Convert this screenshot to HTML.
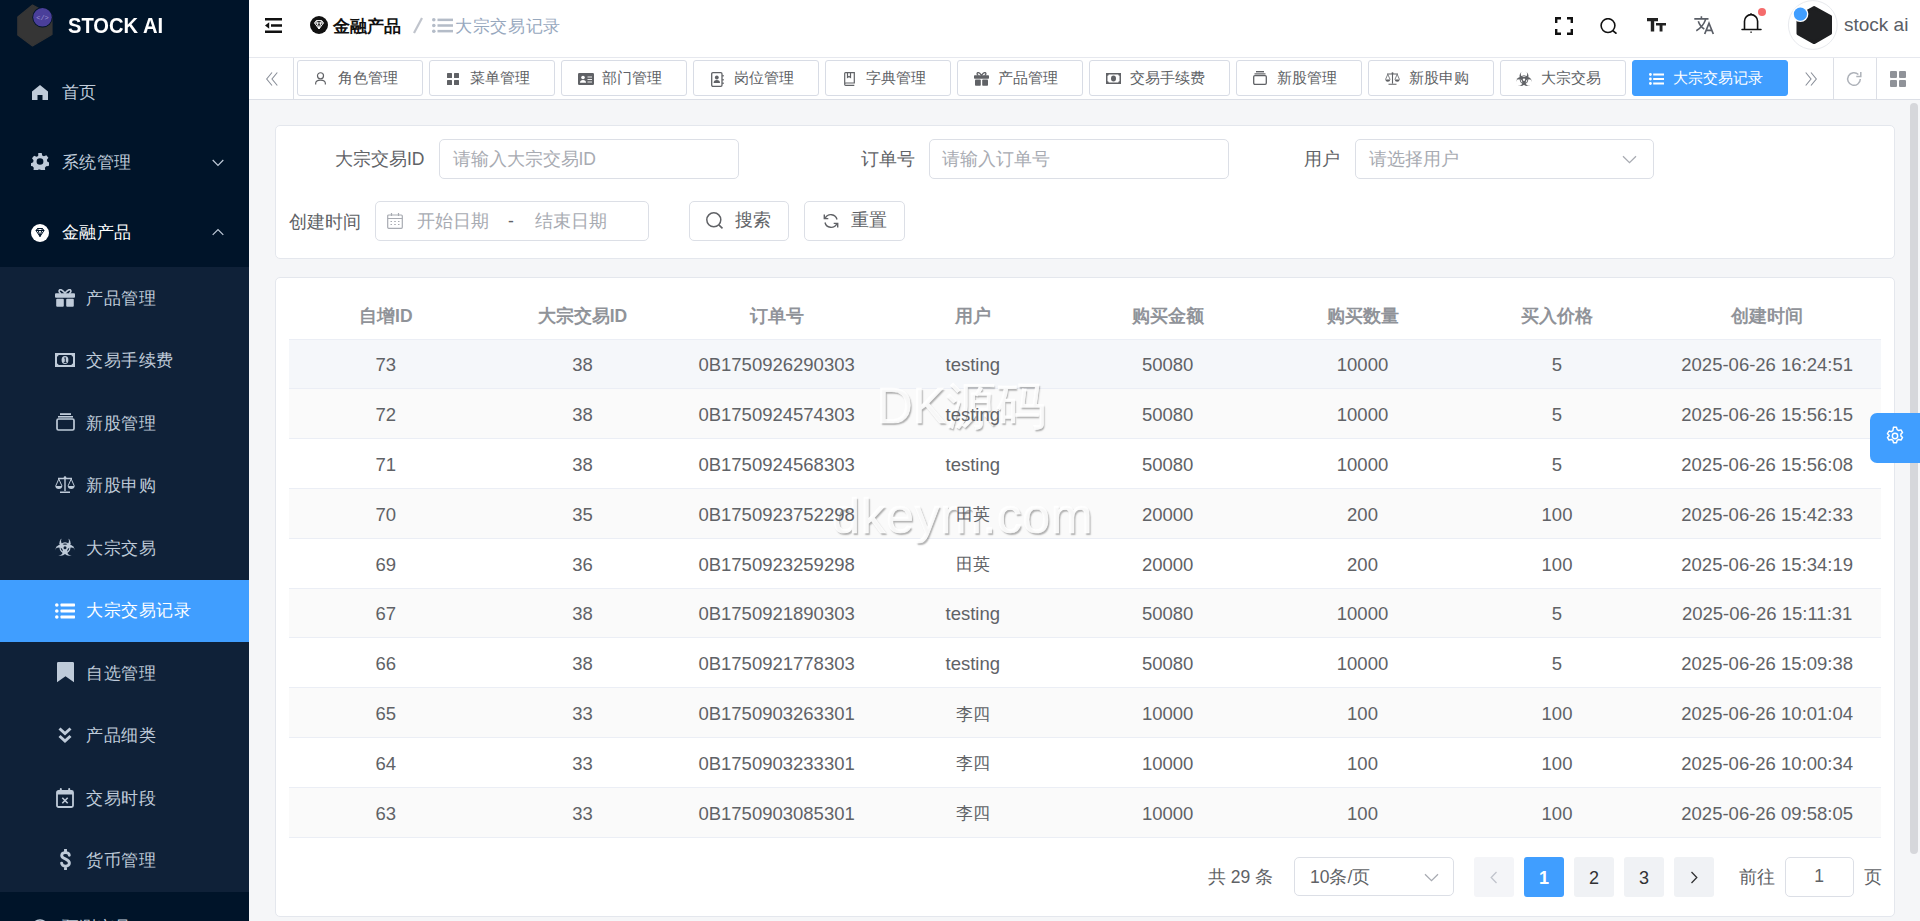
<!DOCTYPE html>
<html><head><meta charset="utf-8">
<style>
*{box-sizing:border-box;margin:0;padding:0}
html,body{width:1920px;height:921px;overflow:hidden;font-family:"Liberation Sans",sans-serif;background:#f5f6f8;color:#606266}
.abs{position:absolute}
#side{position:absolute;left:0;top:0;width:249px;height:921px;background:#001429;overflow:hidden}
#side .sub{position:absolute;left:0;top:267px;width:249px;height:625px;background:#0f2138}
.mi{position:absolute;left:0;width:249px;color:#bfcbd9;font-size:17px;letter-spacing:0.5px;white-space:nowrap}
.mi span{position:absolute}
.mi svg{position:absolute}
#main{position:absolute;left:249px;top:0;width:1671px;height:921px}
#hdr{position:absolute;left:0;top:0;width:1671px;height:57.5px;background:#fff;border-bottom:1px solid #e6e8ee}
#tabs{position:absolute;left:0;top:57.5px;width:1671px;height:42.5px;background:#fff;border-bottom:1px solid #dcdfe6}
.tab{position:absolute;top:2.5px;height:36px;border:1px solid #d8dce5;border-radius:3px;background:#fff;color:#606266;font-size:15px;white-space:nowrap}
.tab span{position:absolute;top:8px}
.tab svg{position:absolute}
.card{position:absolute;background:#fff;border:1px solid #e4e7ed;border-radius:5px}
.lbl{position:absolute;font-size:17.5px;color:#606266;white-space:nowrap}
.inp{position:absolute;height:39px;border:1px solid #dcdfe6;border-radius:5px;background:#fff}
.ph{position:absolute;font-size:17.5px;color:#a8abb2;white-space:nowrap}
.btn{position:absolute;height:39.5px;border:1px solid #dcdfe6;border-radius:5px;background:#fff;color:#606266;font-size:17.5px}
.th{position:absolute;text-align:center;font-size:17.5px;font-weight:bold;color:#909399;white-space:nowrap}
.td{position:absolute;z-index:3;text-align:center;font-size:18.5px;color:#606266;white-space:nowrap}
.wm{z-index:2;color:rgba(255,255,255,0.9);text-shadow:1.5px 1.5px 1.5px rgba(0,0,0,0.3);white-space:nowrap}
.pg{position:absolute;width:40px;height:39.5px;border-radius:3px;text-align:center;line-height:42.5px;font-size:18px}
</style></head><body>
<div id="side">
  <svg class="abs" style="left:17px;top:4px" width="37" height="43" viewBox="0 0 37 43">
    <polygon points="15.5,1 35,11.5 35,30.5 15.5,42 0.8,31 0.8,13" fill="#353535" stroke="#353535" stroke-width="1.2" stroke-linejoin="round"/>
    <circle cx="25.5" cy="13.3" r="10.2" fill="#001429"/>
    <circle cx="25.5" cy="13.3" r="9.3" fill="#4a3f9a"/>
    <text x="25.5" y="16" font-size="7" fill="#9c95d0" text-anchor="middle" font-family="Liberation Mono">&lt;/&gt;</text>
  </svg>
  <div class="abs" style="left:67.5px;top:13px;font-size:22px;font-weight:bold;color:#fff;transform:scaleX(0.915);transform-origin:0 0">STOCK AI</div>

  <div class="mi" style="top:57.5px;height:70px">
    <svg style="left:32px;top:27px" width="16" height="15" viewBox="0 0 16 15"><path d="M8 0 L16 6.5 V15 H10.5 V10 H5.5 V15 H0 V6.5 Z" fill="#bfcbd9"/></svg>
    <span style="left:61.5px;top:23.5px">首页</span>
  </div>
  <div class="mi" style="top:127.5px;height:70px">
    <svg style="left:31px;top:25.5px" width="18" height="17" viewBox="0 0 18 18" preserveAspectRatio="none"><path fill="#bfcbd9" fill-rule="evenodd" d="M7.3 0h3.4l.5 2.6 1.7.9 2.4-1.1 2.1 2.6-1.5 2.2.3 1.9 2.3 1.3-.8 3.3-2.6.3-1.2 1.5.3 2.6-3.1 1.4-1.8-1.9h-1.9l-1.8 1.9-3.1-1.4.3-2.6-1.2-1.5-2.6-.3L-.1 11l2.3-1.3.3-1.9L1 5.6l2.1-2.6 2.4 1.1 1.7-.9zM9 5.6a3.4 3.4 0 1 0 0 6.8 3.4 3.4 0 0 0 0-6.8z"/></svg>
    <span style="left:61.5px;top:23.5px">系统管理</span>
    <svg style="left:211.5px;top:31px" width="12" height="8" viewBox="0 0 12 8"><path d="M.7 1l5.3 5.3L11.3 1" stroke="#bfcbd9" stroke-width="1.2" fill="none"/></svg>
  </div>
  <div class="mi" style="top:197.5px;height:70px;color:#fff">
    <svg style="left:31px;top:26px" width="18" height="18" viewBox="0 0 18 18"><circle cx="9" cy="9" r="9" fill="#fff"/><path d="M5 6.5l1.5-2h5l1.5 2L9 12.5z M5 6.5h8 M7.3 6.5L9 12.5 10.7 6.5 M6.5 4.5l.8 2 M11.5 4.5l-.8 2" stroke="#001429" stroke-width="1" fill="none" stroke-linejoin="round"/></svg>
    <span style="left:61.5px;top:23.5px">金融产品</span>
    <svg style="left:211.5px;top:30px" width="12" height="8" viewBox="0 0 12 8"><path d="M.7 6.8l5.3-5.3 5.3 5.3" stroke="#bfcbd9" stroke-width="1.2" fill="none"/></svg>
  </div>
  <div class="sub">
    <div class="mi" style="top:0.0px;height:62.5px">
      <svg style="left:55px;top:21.5px" width="20" height="18" viewBox="0 0 20 18"><path d="M6 4.2C4 4.2 3.3 1 5.3 .7 7 .4 8.6 2.6 10 4.2 11.4 2.6 13 .4 14.7.7 16.7 1 16 4.2 14 4.2" stroke="#bfcbd9" stroke-width="1.6" fill="none"/><rect x="0" y="4.2" width="20" height="4.5" rx="1" fill="#bfcbd9"/><rect x="1.2" y="9.8" width="7.6" height="8" rx="1" fill="#bfcbd9"/><rect x="11.2" y="9.8" width="7.6" height="8" rx="1" fill="#bfcbd9"/></svg>
      <span style="left:86px;top:19.5px">产品管理</span>
    </div>
    <div class="mi" style="top:62.5px;height:62.5px">
      <svg style="left:55px;top:23px" width="20" height="14" viewBox="0 0 20 14"><rect x="0" y="0" width="20" height="14" fill="#bfcbd9"/><path d="M2 3.5Q3.5 3.5 3.5 2H16.5Q16.5 3.5 18 3.5V10.5Q16.5 10.5 16.5 12H3.5Q3.5 10.5 2 10.5Z" fill="#0f2138"/><ellipse cx="10" cy="7" rx="3.4" ry="4" fill="#bfcbd9"/><path d="M9.2 5.2L10.3 4.6V9.4M8.8 9.4H11.6" stroke="#0f2138" stroke-width="1" fill="none"/></svg>
      <span style="left:86px;top:19.5px">交易手续费</span>
    </div>
    <div class="mi" style="top:125.0px;height:62.5px">
      <svg style="left:55.5px;top:20.5px" width="19" height="18" viewBox="0 0 19 18"><rect x="4" y="0.2" width="11" height="1.8" fill="#bfcbd9"/><rect x="2" y="3" width="15" height="1.6" fill="#bfcbd9"/><rect x="1" y="6" width="17" height="11" rx="1.5" stroke="#bfcbd9" stroke-width="1.7" fill="none"/></svg>
      <span style="left:86px;top:19.5px">新股管理</span>
    </div>
    <div class="mi" style="top:187.5px;height:62.5px">
      <svg style="left:55px;top:21px" width="20" height="17" viewBox="0 0 20 17"><circle cx="10" cy="1.5" r="1.3" fill="#bfcbd9"/><path d="M3 2.5H17M10 2.5V15M5 16.2H15" stroke="#bfcbd9" stroke-width="1.4"/><path d="M3.8 3L.7 10M3.8 3L7 10M16.2 3L13 10M16.2 3L19.3 10" stroke="#bfcbd9" stroke-width="1"/><path d="M.3 10H7.3Q7 13 3.8 13 .6 13 .3 10ZM12.7 10H19.7Q19.4 13 16.2 13 13 13 12.7 10Z" fill="#bfcbd9"/></svg>
      <span style="left:86px;top:19.5px">新股申购</span>
    </div>
    <div class="mi" style="top:250.0px;height:62.5px">
      <svg style="left:55px;top:19.5px" width="20" height="20" viewBox="0 0 20 20"><defs><mask id="bm1"><rect x="-5" y="-5" width="30" height="30" fill="#fff"/><circle cx="10.00" cy="3.70" r="3.95" fill="#000"/><circle cx="16.15" cy="14.35" r="3.95" fill="#000"/><circle cx="3.85" cy="14.35" r="3.95" fill="#000"/><circle cx="10" cy="10.8" r="1.5" fill="#000"/></mask></defs><g mask="url(#bm1)"><circle cx="10.00" cy="6.20" r="5.6" fill="#bfcbd9"/><circle cx="13.98" cy="13.10" r="5.6" fill="#bfcbd9"/><circle cx="6.02" cy="13.10" r="5.6" fill="#bfcbd9"/></g><circle cx="10" cy="10.8" r="4.9" stroke="#bfcbd9" stroke-width="1.2" fill="none"/></svg>
      <span style="left:86px;top:19.5px">大宗交易</span>
    </div>
    <div class="mi" style="top:312.5px;height:62.5px;background:#409eff;color:#fff">
      <svg style="left:55px;top:23px" width="20" height="16" viewBox="0 0 20 16"><circle cx="1.8" cy="2" r="1.8" fill="#fff"/><circle cx="1.8" cy="8" r="1.8" fill="#fff"/><circle cx="1.8" cy="14" r="1.8" fill="#fff"/><rect x="5.5" y="0.6" width="14.5" height="2.8" rx=".6" fill="#fff"/><rect x="5.5" y="6.6" width="14.5" height="2.8" rx=".6" fill="#fff"/><rect x="5.5" y="12.6" width="14.5" height="2.8" rx=".6" fill="#fff"/></svg>
      <span style="left:86px;top:19.5px">大宗交易记录</span>
    </div>
    <div class="mi" style="top:375.0px;height:62.5px">
      <svg style="left:56.7px;top:20.2px" width="17" height="21" viewBox="0 0 17 21"><path d="M1.3 0H15.7Q17 0 17 1.3V20.3L8.5 14.3 0 20.3V1.3Q0 0 1.3 0Z" fill="#bfcbd9"/></svg>
      <span style="left:86px;top:19.5px">自选管理</span>
    </div>
    <div class="mi" style="top:437.5px;height:62.5px">
      <svg style="left:58px;top:22px" width="14" height="17" viewBox="0 0 14 17"><path d="M1.5 1.5L7 6.5 12.5 1.5M1.5 9L7 14 12.5 9" stroke="#bfcbd9" stroke-width="3" fill="none" stroke-linejoin="miter"/></svg>
      <span style="left:86px;top:19.5px">产品细类</span>
    </div>
    <div class="mi" style="top:500.0px;height:62.5px">
      <svg style="left:56px;top:20.5px" width="18" height="20" viewBox="0 0 18 20"><rect x="1" y="3" width="16" height="16" rx="1.5" stroke="#bfcbd9" stroke-width="1.8" fill="none"/><rect x="1" y="3" width="16" height="3.5" fill="#bfcbd9"/><rect x="3.8" y="0" width="2" height="5" rx="1" fill="#bfcbd9"/><rect x="12.2" y="0" width="2" height="5" rx="1" fill="#bfcbd9"/><path d="M6.3 9.8L11.7 15.2M11.7 9.8L6.3 15.2" stroke="#bfcbd9" stroke-width="1.6"/></svg>
      <span style="left:86px;top:19.5px">交易时段</span>
    </div>
    <div class="mi" style="top:562.5px;height:62.5px">
      <svg style="left:59.5px;top:19.5px" width="11" height="21" viewBox="0 0 11 21"><path d="M9.3 6.3C9.3 4.6 7.6 3.6 5.5 3.6S1.7 4.6 1.7 6.4C1.7 10.4 9.4 9.3 9.4 14 9.4 15.9 7.6 17.1 5.5 17.1S1.6 15.9 1.6 14.1M5.5 0.6V3.6M5.5 17.1V20.3" stroke="#bfcbd9" stroke-width="2.9" fill="none" stroke-linecap="round"/></svg>
      <span style="left:86px;top:19.5px">货币管理</span>
    </div>
  </div>
  <div class="mi" style="top:892.5px;height:70px">
    <svg style="left:31px;top:26px" width="18" height="18" viewBox="0 0 18 18"><circle cx="9" cy="9" r="8" stroke="#bfcbd9" stroke-width="1.5" fill="none"/></svg>
    <span style="left:61.5px;top:23.5px">预测产品</span>
  </div>
</div>
<div id="main">
  <div id="hdr">
    <svg class="abs" style="left:16px;top:17.5px" width="17" height="15" viewBox="0 0 17 15"><path d="M0 1.2H17M6 7.5H17M0 13.8H17" stroke="#111" stroke-width="2.4"/><path d="M0 7.5L4.2 4.3V10.7Z" fill="#111"/></svg>
    <svg class="abs" style="left:60.5px;top:16px" width="18" height="18" viewBox="0 0 18 18"><circle cx="9" cy="9" r="9" fill="#111"/><path d="M4.6 7l1.7-2.4h5.4L13.4 7 9 13z M4.6 7h8.8 M7.2 7L9 13 10.8 7 M6.5 4.8l.8 2.2 M11.5 4.8l-.8 2.2" stroke="#fff" stroke-width="1" fill="none" stroke-linejoin="round"/></svg>
    <div class="abs" style="left:83.5px;top:15px;font-size:17px;font-weight:bold;color:#111;white-space:nowrap;letter-spacing:0.3px">金融产品</div>
    <svg class="abs" style="left:163px;top:17px" width="12" height="17" viewBox="0 0 12 17"><path d="M10 1L2 16" stroke="#c0c4cc" stroke-width="2.2"/></svg>
    <svg class="abs" style="left:182.5px;top:17.5px" width="21" height="15" viewBox="0 0 21 15"><circle cx="1.8" cy="1.8" r="1.8" fill="#b4bcc8"/><circle cx="1.8" cy="7.5" r="1.8" fill="#b4bcc8"/><circle cx="1.8" cy="13.2" r="1.8" fill="#b4bcc8"/><rect x="5.5" y=".6" width="15.5" height="2.5" fill="#b4bcc8"/><rect x="5.5" y="6.25" width="15.5" height="2.5" fill="#b4bcc8"/><rect x="5.5" y="11.9" width="15.5" height="2.5" fill="#b4bcc8"/></svg>
    <div class="abs" style="left:206px;top:15px;font-size:17px;color:#97a8be;white-space:nowrap;letter-spacing:0.7px">大宗交易记录</div>

    <svg class="abs" style="left:1306px;top:16.5px" width="18" height="18" viewBox="0 0 18 18"><path d="M1.2 6V1.2H6M12 1.2H16.8V6M16.8 12V16.8H12M6 16.8H1.2V12" stroke="#111" stroke-width="2.4" fill="none"/></svg>
    <svg class="abs" style="left:1351px;top:17.5px" width="19" height="16" viewBox="0 0 19 16"><circle cx="8" cy="7.6" r="6.9" stroke="#111" stroke-width="1.6" fill="none"/><path d="M12.8 12.6L16.5 15.6" stroke="#111" stroke-width="1.8"/></svg>
    <svg class="abs" style="left:1397.5px;top:18px" width="19" height="14" viewBox="0 0 19 14"><path d="M0 0H11V3.2H7.2V13.6H3.8V3.2H0Z M9 5H19V7.4H15.5V13.6H12.6V7.4H9Z" fill="#222"/></svg>
    <svg class="abs" style="left:1445px;top:16px" width="21" height="19" viewBox="0 0 21 19"><path d="M0.3 2.9H14.5M7.4 0.2V2.9M11.6 3.6Q9 11 2.3 14.7M4.3 5.2Q6 10.5 10.3 13" stroke="#5a5e66" stroke-width="1.6" fill="none"/><path d="M10.7 18L15 7.3 19.3 18M12.3 14.4H17.7" stroke="#5a5e66" stroke-width="1.7" fill="none"/></svg>
    <svg class="abs" style="left:1491px;top:7px" width="27" height="27" viewBox="0 0 27 27"><path d="M4.5 22.4V14.2A6.55 6.55 0 0 1 17.6 14.2V22.4" stroke="#111" stroke-width="1.6" fill="none"/><path d="M2 22.6H21" stroke="#111" stroke-width="1.5" stroke-linecap="round"/><path d="M10.2 7.3L11 6.6 11.8 7.3Z" fill="#111" stroke="#111" stroke-width="1"/><rect x="10.2" y="24.6" width="1.8" height="1.1" fill="#222"/><circle cx="22" cy="4.9" r="4" fill="#f56c6c"/></svg>
    <svg class="abs" style="left:1538px;top:0" width="52" height="51" viewBox="0 0 52 51"><circle cx="25.8" cy="25" r="24.4" fill="#fff" stroke="#e8eaee" stroke-width="1"/><path d="M27.1 7.5L43.5 16.6V33.2L27.1 42.6 11 33.6V16.6Z" fill="#1e1f21" stroke="#1e1f21" stroke-width="3" stroke-linejoin="round"/><circle cx="13.4" cy="14.1" r="8" fill="#fff"/><circle cx="13.4" cy="14.1" r="6.6" fill="#409eff"/></svg>
    <div class="abs" style="left:1595px;top:14px;font-size:19px;color:#5a5e66;white-space:nowrap">stock ai</div>
  </div>
  <div id="tabs">
    <svg class="abs" style="left:17px;top:14.5px" width="12" height="14" viewBox="0 0 12 14"><path d="M6 .5L.7 7 6 13.5M11.3.5L6 7 11.3 13.5" stroke="#8a8f99" stroke-width="1.1" fill="none"/></svg>
    <div class="abs" style="left:44px;top:0;width:1px;height:42px;background:#dcdfe6"></div>
    <div class="tab" style="left:48.00px;width:126.25px"><svg style="left:17px;top:10.5px" width="11" height="13" viewBox="0 0 12 14"><circle cx="6" cy="4" r="3.3" stroke="#606266" stroke-width="1.3" fill="none"/><path d="M.7 13.6V12.5Q.7 8.8 6 8.8T11.3 12.5V13.6" stroke="#606266" stroke-width="1.3" fill="none"/></svg><span style="left:40px">角色管理</span></div>
    <div class="tab" style="left:180.10px;width:126.25px"><svg style="left:17px;top:12px" width="12" height="12" viewBox="0 0 12 12"><rect x="0" y="0" width="5" height="5" rx=".5" fill="#606266"/><rect x="7" y="0" width="5" height="5" rx=".5" fill="#606266"/><rect x="0" y="7" width="5" height="5" rx=".5" fill="#606266"/><rect x="7" y="7" width="5" height="5" rx=".5" fill="#606266"/></svg><span style="left:40px">菜单管理</span></div>
    <div class="tab" style="left:312.20px;width:126.25px"><svg style="left:16px;top:12px" width="16" height="12" viewBox="0 0 16 12"><rect x="0" y="0" width="16" height="12" rx="1.2" fill="#606266"/><circle cx="5" cy="4.5" r="1.8" fill="#fff"/><path d="M2 9.8Q2 7 5 7T8 9.8Z" fill="#fff"/><path d="M9.5 4H14M9.5 6.5H14M9.5 9H14" stroke="#fff" stroke-width=".9"/></svg><span style="left:40px">部门管理</span></div>
    <div class="tab" style="left:444.10px;width:126.25px"><svg style="left:16.5px;top:10.5px" width="13" height="15" viewBox="0 0 13 15"><rect x=".7" y=".7" width="10.3" height="13.6" rx="1.2" stroke="#606266" stroke-width="1.3" fill="none"/><circle cx="5.8" cy="5.5" r="1.9" fill="#606266"/><path d="M2.6 11Q2.6 8 5.8 8T9 11Z" fill="#606266"/><path d="M12 3V4.5M12 7V8.5M12 10.5V12" stroke="#606266" stroke-width="1.4"/></svg><span style="left:40px">岗位管理</span></div>
    <div class="tab" style="left:576.20px;width:126.25px"><svg style="left:17.5px;top:10.5px" width="11" height="14" viewBox="0 0 11 14"><path d="M1.5.7H10.3V11H1.8Q.7 11 .7 12.2T1.8 13.3H10.3 M.7 12.2V1.5Q.7.7 1.5.7 M3.5.7V5.5L5 4.5 6.5 5.5V.7" stroke="#606266" stroke-width="1.2" fill="none"/></svg><span style="left:40px">字典管理</span></div>
    <div class="tab" style="left:708.20px;width:126.25px"><svg style="left:16px;top:10.5px" width="15" height="14" viewBox="0 0 15 14"><path d="M4.5 3.3C3 3.3 2.5.8 4 .6 5.3.3 6.5 2 7.5 3.3 8.5 2 9.7.3 11 .6 12.5.8 12 3.3 10.5 3.3" stroke="#606266" stroke-width="1.3" fill="none"/><rect x="0" y="3.3" width="15" height="3.5" rx=".8" fill="#606266"/><rect x="1" y="7.6" width="5.8" height="6.2" rx=".8" fill="#606266"/><rect x="8.2" y="7.6" width="5.8" height="6.2" rx=".8" fill="#606266"/></svg><span style="left:40px">产品管理</span></div>
    <div class="tab" style="left:840.20px;width:140.7px"><svg style="left:16px;top:12px" width="15" height="11" viewBox="0 0 15 11"><rect x="0" y="0" width="15" height="11" fill="#606266"/><path d="M1.5 2.8Q2.7 2.8 2.7 1.5H12.3Q12.3 2.8 13.5 2.8V8.2Q12.3 8.2 12.3 9.5H2.7Q2.7 8.2 1.5 8.2Z" fill="#fff"/><ellipse cx="7.5" cy="5.5" rx="2.5" ry="3" fill="#606266"/></svg><span style="left:40px">交易手续费</span></div>
    <div class="tab" style="left:986.80px;width:126.25px"><svg style="left:16px;top:10px" width="14" height="14" viewBox="0 0 14 14"><rect x="3" y="0" width="8" height="1.4" fill="#606266"/><rect x="1.5" y="2.3" width="11" height="1.2" fill="#606266"/><rect x=".7" y="4.6" width="12.6" height="8.7" rx="1.2" stroke="#606266" stroke-width="1.3" fill="none"/></svg><span style="left:40px">新股管理</span></div>
    <div class="tab" style="left:1118.80px;width:126.25px"><svg style="left:16px;top:11px" width="15" height="13" viewBox="0 0 15 13"><circle cx="7.5" cy="1.2" r="1" fill="#606266"/><path d="M2 2H13M7.5 2V11.5M3.5 12.3H11.5" stroke="#606266" stroke-width="1.1"/><path d="M2.8 2.3L.5 7.5M2.8 2.3L5.1 7.5M12.2 2.3L9.9 7.5M12.2 2.3L14.5 7.5" stroke="#606266" stroke-width=".8"/><path d="M.3 7.5H5.3Q5.1 9.8 2.8 9.8 .5 9.8.3 7.5ZM9.7 7.5H14.7Q14.5 9.8 12.2 9.8 9.9 9.8 9.7 7.5Z" fill="#606266"/></svg><span style="left:40px">新股申购</span></div>
    <div class="tab" style="left:1250.90px;width:126.25px"><svg style="left:15.5px;top:10px" width="16" height="16" viewBox="0 0 20 20"><defs><mask id="bm2"><rect x="-5" y="-5" width="30" height="30" fill="#fff"/><circle cx="10.00" cy="3.70" r="3.95" fill="#000"/><circle cx="16.15" cy="14.35" r="3.95" fill="#000"/><circle cx="3.85" cy="14.35" r="3.95" fill="#000"/><circle cx="10" cy="10.8" r="1.5" fill="#000"/></mask></defs><g mask="url(#bm2)"><circle cx="10.00" cy="6.20" r="5.6" fill="#606266"/><circle cx="13.98" cy="13.10" r="5.6" fill="#606266"/><circle cx="6.02" cy="13.10" r="5.6" fill="#606266"/></g><circle cx="10" cy="10.8" r="4.9" stroke="#606266" stroke-width="1.2" fill="none"/></svg><span style="left:40px">大宗交易</span></div>
    <div class="tab" style="left:1382.80px;width:156.6px;background:#409eff;border-color:#409eff;color:#fff"><svg style="left:16px;top:12px" width="15" height="12" viewBox="0 0 15 12"><circle cx="1.4" cy="1.5" r="1.4" fill="#fff"/><circle cx="1.4" cy="6" r="1.4" fill="#fff"/><circle cx="1.4" cy="10.5" r="1.4" fill="#fff"/><rect x="4.2" y=".5" width="10.8" height="2" fill="#fff"/><rect x="4.2" y="5" width="10.8" height="2" fill="#fff"/><rect x="4.2" y="9.5" width="10.8" height="2" fill="#fff"/></svg><span style="left:40px">大宗交易记录</span></div>
    <svg class="abs" style="left:1555.5px;top:14.5px" width="12" height="14" viewBox="0 0 12 14"><path d="M.7.5L6 7 .7 13.5M6 .5L11.3 7 6 13.5" stroke="#8a8f99" stroke-width="1.1" fill="none"/></svg>
    <div class="abs" style="left:1583.5px;top:0;width:1px;height:42px;background:#dcdfe6"></div>
    <svg class="abs" style="left:1597px;top:13.5px" width="16" height="16" viewBox="0 0 16 16"><path d="M14.3 8A6.3 6.3 0 1 1 12.4 3.5" stroke="#aeb2b9" stroke-width="1.5" fill="none"/><path d="M14.8 1V5.5H10.3" stroke="#aeb2b9" stroke-width="1.5" fill="none"/></svg>
    <div class="abs" style="left:1627px;top:0;width:1px;height:42px;background:#dcdfe6"></div>
    <svg class="abs" style="left:1641px;top:13px" width="16" height="16" viewBox="0 0 16 16"><rect x="0" y="0" width="7" height="7" rx="1" fill="#909399"/><rect x="9" y="0" width="7" height="7" rx="1" fill="#909399"/><rect x="0" y="9" width="7" height="7" rx="1" fill="#909399"/><rect x="9" y="9" width="7" height="7" rx="1" fill="#909399"/></svg>
  </div>
<!--CONTENT-->
  <div class="card" style="left:26.40px;top:125.4px;width:1620px;height:134px"></div>
  <div class="lbl" style="left:86.00px;top:147px">大宗交易ID</div>
  <div class="inp" style="left:190.25px;top:139.25px;width:299.50px;height:39.50px"></div>
  <div class="ph" style="left:203.50px;top:147.25px">请输入大宗交易ID</div>
  <div class="lbl" style="left:612.00px;top:147px">订单号</div>
  <div class="inp" style="left:680.40px;top:139.25px;width:299.50px;height:39.50px"></div>
  <div class="ph" style="left:693.00px;top:147.25px">请输入订单号</div>
  <div class="lbl" style="left:1055.00px;top:147px">用户</div>
  <div class="inp" style="left:1105.50px;top:139.25px;width:299.50px;height:39.50px"></div>
  <div class="ph" style="left:1120.00px;top:147.25px">请选择用户</div>
  <svg class="abs" style="left:1373.00px;top:154.5px" width="15" height="9" viewBox="0 0 15 9"><path d="M1 1.2L7.5 7.6 14 1.2" stroke="#a8abb2" stroke-width="1.3" fill="none"/></svg>
  <div class="lbl" style="left:39.75px;top:209.5px">创建时间</div>
  <div class="inp" style="left:125.50px;top:201.25px;width:274.50px;height:39.50px"></div>
  <div class="ph" style="left:168.00px;top:209.25px">开始日期</div>
  <div class="ph" style="left:259.00px;top:211px;color:#606266">-</div>
  <div class="ph" style="left:285.50px;top:209.25px">结束日期</div>
  <svg class="abs" style="left:138.00px;top:213px" width="16" height="16" viewBox="0 0 16 16"><rect x=".7" y="2" width="14.6" height="13.3" rx="1" stroke="#a8abb2" stroke-width="1.2" fill="none"/><path d="M.7 5.5H15.3M4.5 0V3M11.5 0V3" stroke="#a8abb2" stroke-width="1.2"/><path d="M3.5 8.5H5M7.2 8.5H8.8M11 8.5H12.5M3.5 11.5H5M7.2 11.5H8.8M11 11.5H12.5" stroke="#a8abb2" stroke-width="1"/></svg>
  <div class="btn" style="left:440.40px;top:201.25px;width:99.5px;height:39.5px"></div>
  <svg class="abs" style="left:457.00px;top:212px" width="18" height="17" viewBox="0 0 18 17"><circle cx="7.8" cy="7.8" r="7" stroke="#606266" stroke-width="1.5" fill="none"/><path d="M12.8 12.8L16.5 16.3" stroke="#606266" stroke-width="1.6"/></svg>
  <div class="lbl" style="left:485.75px;top:208px">搜索</div>
  <div class="btn" style="left:555.10px;top:201.25px;width:100.5px;height:39.5px"></div>
  <svg class="abs" style="left:574.00px;top:213px" width="16" height="16" viewBox="0 0 16 16"><path d="M14 6.5A6.3 6.3 0 0 0 2.3 5M2 9.5A6.3 6.3 0 0 0 13.7 11" stroke="#606266" stroke-width="1.4" fill="none"/><path d="M1.3 1.5V5.6H5.3M14.7 14.5V10.4H10.7" stroke="#606266" stroke-width="1.4" fill="none"/></svg>
  <div class="lbl" style="left:601.60px;top:208px">重置</div>
  <div class="card" style="left:26.40px;top:277.4px;width:1620px;height:640px"></div>
  <div class="abs" style="left:40.00px;top:289.8px;width:1592px;height:49.8px;border-bottom:1px solid #ebeef5"></div>
  <div class="th" style="left:41.80px;top:303.8px;width:190px">自增ID</div>
  <div class="th" style="left:238.50px;top:303.8px;width:190px">大宗交易ID</div>
  <div class="th" style="left:432.60px;top:303.8px;width:190px">订单号</div>
  <div class="th" style="left:628.80px;top:303.8px;width:190px">用户</div>
  <div class="th" style="left:823.70px;top:303.8px;width:190px">购买金额</div>
  <div class="th" style="left:1018.50px;top:303.8px;width:190px">购买数量</div>
  <div class="th" style="left:1213.00px;top:303.8px;width:190px">买入价格</div>
  <div class="th" style="left:1423.20px;top:303.8px;width:190px">创建时间</div>
  <div class="abs" style="left:40.00px;top:339.60px;width:1592px;height:49.8px;background:#f5f7fa;border-bottom:1px solid #ebeef5"></div>
  <div class="td" style="left:41.80px;top:354.40px;width:190px">73</div>
  <div class="td" style="left:238.50px;top:354.40px;width:190px">38</div>
  <div class="td" style="left:432.60px;top:354.40px;width:190px">0B1750926290303</div>
  <div class="td" style="left:628.80px;top:354.40px;width:190px">testing</div>
  <div class="td" style="left:823.70px;top:354.40px;width:190px">50080</div>
  <div class="td" style="left:1018.50px;top:354.40px;width:190px">10000</div>
  <div class="td" style="left:1213.00px;top:354.40px;width:190px">5</div>
  <div class="td" style="left:1423.20px;top:354.40px;width:190px">2025-06-26 16:24:51</div>
  <div class="abs" style="left:40.00px;top:389.40px;width:1592px;height:49.8px;background:#fafafa;border-bottom:1px solid #ebeef5"></div>
  <div class="td" style="left:41.80px;top:404.20px;width:190px">72</div>
  <div class="td" style="left:238.50px;top:404.20px;width:190px">38</div>
  <div class="td" style="left:432.60px;top:404.20px;width:190px">0B1750924574303</div>
  <div class="td" style="left:628.80px;top:404.20px;width:190px">testing</div>
  <div class="td" style="left:823.70px;top:404.20px;width:190px">50080</div>
  <div class="td" style="left:1018.50px;top:404.20px;width:190px">10000</div>
  <div class="td" style="left:1213.00px;top:404.20px;width:190px">5</div>
  <div class="td" style="left:1423.20px;top:404.20px;width:190px">2025-06-26 15:56:15</div>
  <div class="abs" style="left:40.00px;top:439.20px;width:1592px;height:49.8px;background:#fff;border-bottom:1px solid #ebeef5"></div>
  <div class="td" style="left:41.80px;top:454.00px;width:190px">71</div>
  <div class="td" style="left:238.50px;top:454.00px;width:190px">38</div>
  <div class="td" style="left:432.60px;top:454.00px;width:190px">0B1750924568303</div>
  <div class="td" style="left:628.80px;top:454.00px;width:190px">testing</div>
  <div class="td" style="left:823.70px;top:454.00px;width:190px">50080</div>
  <div class="td" style="left:1018.50px;top:454.00px;width:190px">10000</div>
  <div class="td" style="left:1213.00px;top:454.00px;width:190px">5</div>
  <div class="td" style="left:1423.20px;top:454.00px;width:190px">2025-06-26 15:56:08</div>
  <div class="abs" style="left:40.00px;top:489.00px;width:1592px;height:49.8px;background:#fafafa;border-bottom:1px solid #ebeef5"></div>
  <div class="td" style="left:41.80px;top:503.80px;width:190px">70</div>
  <div class="td" style="left:238.50px;top:503.80px;width:190px">35</div>
  <div class="td" style="left:432.60px;top:503.80px;width:190px">0B1750923752298</div>
  <div class="td" style="left:628.80px;top:503.30px;width:190px;font-size:17px">田英</div>
  <div class="td" style="left:823.70px;top:503.80px;width:190px">20000</div>
  <div class="td" style="left:1018.50px;top:503.80px;width:190px">200</div>
  <div class="td" style="left:1213.00px;top:503.80px;width:190px">100</div>
  <div class="td" style="left:1423.20px;top:503.80px;width:190px">2025-06-26 15:42:33</div>
  <div class="abs" style="left:40.00px;top:538.80px;width:1592px;height:49.8px;background:#fff;border-bottom:1px solid #ebeef5"></div>
  <div class="td" style="left:41.80px;top:553.60px;width:190px">69</div>
  <div class="td" style="left:238.50px;top:553.60px;width:190px">36</div>
  <div class="td" style="left:432.60px;top:553.60px;width:190px">0B1750923259298</div>
  <div class="td" style="left:628.80px;top:553.10px;width:190px;font-size:17px">田英</div>
  <div class="td" style="left:823.70px;top:553.60px;width:190px">20000</div>
  <div class="td" style="left:1018.50px;top:553.60px;width:190px">200</div>
  <div class="td" style="left:1213.00px;top:553.60px;width:190px">100</div>
  <div class="td" style="left:1423.20px;top:553.60px;width:190px">2025-06-26 15:34:19</div>
  <div class="abs" style="left:40.00px;top:588.60px;width:1592px;height:49.8px;background:#fafafa;border-bottom:1px solid #ebeef5"></div>
  <div class="td" style="left:41.80px;top:603.40px;width:190px">67</div>
  <div class="td" style="left:238.50px;top:603.40px;width:190px">38</div>
  <div class="td" style="left:432.60px;top:603.40px;width:190px">0B1750921890303</div>
  <div class="td" style="left:628.80px;top:603.40px;width:190px">testing</div>
  <div class="td" style="left:823.70px;top:603.40px;width:190px">50080</div>
  <div class="td" style="left:1018.50px;top:603.40px;width:190px">10000</div>
  <div class="td" style="left:1213.00px;top:603.40px;width:190px">5</div>
  <div class="td" style="left:1423.20px;top:603.40px;width:190px">2025-06-26 15:11:31</div>
  <div class="abs" style="left:40.00px;top:638.40px;width:1592px;height:49.8px;background:#fff;border-bottom:1px solid #ebeef5"></div>
  <div class="td" style="left:41.80px;top:653.20px;width:190px">66</div>
  <div class="td" style="left:238.50px;top:653.20px;width:190px">38</div>
  <div class="td" style="left:432.60px;top:653.20px;width:190px">0B1750921778303</div>
  <div class="td" style="left:628.80px;top:653.20px;width:190px">testing</div>
  <div class="td" style="left:823.70px;top:653.20px;width:190px">50080</div>
  <div class="td" style="left:1018.50px;top:653.20px;width:190px">10000</div>
  <div class="td" style="left:1213.00px;top:653.20px;width:190px">5</div>
  <div class="td" style="left:1423.20px;top:653.20px;width:190px">2025-06-26 15:09:38</div>
  <div class="abs" style="left:40.00px;top:688.20px;width:1592px;height:49.8px;background:#fafafa;border-bottom:1px solid #ebeef5"></div>
  <div class="td" style="left:41.80px;top:703.00px;width:190px">65</div>
  <div class="td" style="left:238.50px;top:703.00px;width:190px">33</div>
  <div class="td" style="left:432.60px;top:703.00px;width:190px">0B1750903263301</div>
  <div class="td" style="left:628.80px;top:702.50px;width:190px;font-size:17px">李四</div>
  <div class="td" style="left:823.70px;top:703.00px;width:190px">10000</div>
  <div class="td" style="left:1018.50px;top:703.00px;width:190px">100</div>
  <div class="td" style="left:1213.00px;top:703.00px;width:190px">100</div>
  <div class="td" style="left:1423.20px;top:703.00px;width:190px">2025-06-26 10:01:04</div>
  <div class="abs" style="left:40.00px;top:738.00px;width:1592px;height:49.8px;background:#fff;border-bottom:1px solid #ebeef5"></div>
  <div class="td" style="left:41.80px;top:752.80px;width:190px">64</div>
  <div class="td" style="left:238.50px;top:752.80px;width:190px">33</div>
  <div class="td" style="left:432.60px;top:752.80px;width:190px">0B1750903233301</div>
  <div class="td" style="left:628.80px;top:752.30px;width:190px;font-size:17px">李四</div>
  <div class="td" style="left:823.70px;top:752.80px;width:190px">10000</div>
  <div class="td" style="left:1018.50px;top:752.80px;width:190px">100</div>
  <div class="td" style="left:1213.00px;top:752.80px;width:190px">100</div>
  <div class="td" style="left:1423.20px;top:752.80px;width:190px">2025-06-26 10:00:34</div>
  <div class="abs" style="left:40.00px;top:787.80px;width:1592px;height:49.8px;background:#fafafa;border-bottom:1px solid #ebeef5"></div>
  <div class="td" style="left:41.80px;top:802.60px;width:190px">63</div>
  <div class="td" style="left:238.50px;top:802.60px;width:190px">33</div>
  <div class="td" style="left:432.60px;top:802.60px;width:190px">0B1750903085301</div>
  <div class="td" style="left:628.80px;top:802.10px;width:190px;font-size:17px">李四</div>
  <div class="td" style="left:823.70px;top:802.60px;width:190px">10000</div>
  <div class="td" style="left:1018.50px;top:802.60px;width:190px">100</div>
  <div class="td" style="left:1213.00px;top:802.60px;width:190px">100</div>
  <div class="td" style="left:1423.20px;top:802.60px;width:190px">2025-06-26 09:58:05</div>
  <div class="lbl" style="left:958.80px;top:865px">共 29 条</div>
  <div class="inp" style="left:1045.20px;top:857.4px;width:159.4px;height:39px"></div>
  <div class="lbl" style="left:1061.00px;top:865px">10条/页</div>
  <svg class="abs" style="left:1175.00px;top:873px" width="15" height="9" viewBox="0 0 15 9"><path d="M1 1.2L7.5 7.6 14 1.2" stroke="#a8abb2" stroke-width="1.3" fill="none"/></svg>
  <div class="pg" style="left:1225.00px;top:857.25px;background:#f4f5f8;color:#303133"></div>
  <div class="pg" style="left:1275.00px;top:857.25px;background:#409eff;color:#fff;font-weight:bold">1</div>
  <div class="pg" style="left:1325.00px;top:857.25px;background:#f0f2f5;color:#303133">2</div>
  <div class="pg" style="left:1375.00px;top:857.25px;background:#f0f2f5;color:#303133">3</div>
  <div class="pg" style="left:1425.00px;top:857.25px;background:#f0f2f5;color:#303133"></div>
  <svg class="abs" style="left:1241.00px;top:871px" width="8" height="13" viewBox="0 0 8 13"><path d="M6.5 1L1.2 6.5 6.5 12" stroke="#c0c4cc" stroke-width="1.3" fill="none"/></svg>
  <svg class="abs" style="left:1441.00px;top:871px" width="8" height="13" viewBox="0 0 8 13"><path d="M1.5 1L6.8 6.5 1.5 12" stroke="#303133" stroke-width="1.3" fill="none"/></svg>
  <div class="lbl" style="left:1490.00px;top:865px">前往</div>
  <div class="inp" style="left:1535.60px;top:857.25px;width:69px;height:39.5px"></div>
  <div class="lbl" style="left:1535.60px;top:866px;width:69px;text-align:center;color:#606266">1</div>
  <div class="lbl" style="left:1614.70px;top:865px">页</div>
<!--/CONTENT-->
</div>
<div class="abs" style="left:1910.2px;top:103px;width:7.6px;height:751px;border-radius:4px;background:#d6d7db"></div>
<div class="abs" style="left:1870px;top:413px;width:50px;height:50px;border-radius:7px 0 0 7px;background:#409eff"></div>
<svg class="abs" style="left:1885px;top:426px" width="20" height="20" viewBox="0 0 18 18"><path d="M7.6 1.2h2.8l.5 2 1.5.9 2-.6 1.4 2.4-1.5 1.4v1.6l1.5 1.4-1.4 2.4-2-.6-1.5.9-.5 2H7.6l-.5-2-1.5-.9-2 .6-1.4-2.4 1.5-1.4V8.3L2.2 6.9l1.4-2.4 2 .6 1.5-.9z" stroke="#fff" stroke-width="1.3" fill="none" stroke-linejoin="round"/><circle cx="9" cy="9" r="2.4" stroke="#fff" stroke-width="1.3" fill="none"/></svg>
<div class="abs wm" style="left:876.5px;top:372.5px;font-size:50px;-webkit-text-stroke:0.7px rgba(255,255,255,0.9)">DK源码</div>
<div class="abs wm" style="left:832px;top:487px;font-size:50px;letter-spacing:0.6px;-webkit-text-stroke:0.7px rgba(255,255,255,0.9)">dkeym.com</div>
</body></html>
